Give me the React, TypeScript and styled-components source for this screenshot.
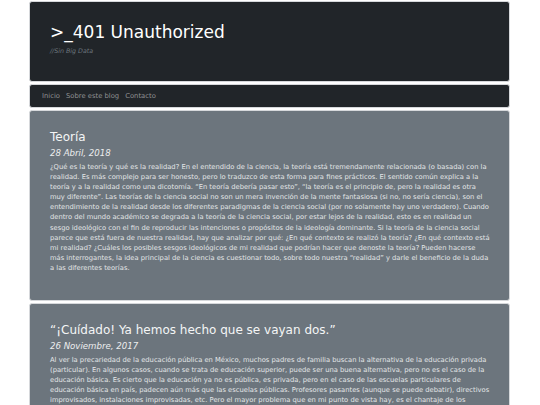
import React from 'react'
import { styled, createGlobalStyle } from 'styled-components'

const GlobalStyle = createGlobalStyle`
  html, body {
    margin: 0;
    padding: 0;
    background: #ffffff;
    font-family: "DejaVu Sans", Verdana, sans-serif;
  }
`

const posts = [
  {
    title: 'Teoría',
    date: '28 Abril, 2018',
    body:
      '¿Qué es la teoría y qué es la realidad? En el entendido de la ciencia, la teoría está tremendamente relacionada (o basada) con la realidad. Es más complejo para ser honesto, pero lo traduzco de esta forma para fines prácticos. El sentido común explica a la teoría y a la realidad como una dicotomía. “En teoría debería pasar esto”, “la teoría es el principio de, pero la realidad es otra muy diferente”. Las teorías de la ciencia social no son un mera invención de la mente fantasiosa (si no, no sería ciencia), son el entendimiento de la realidad desde los diferentes paradigmas de la ciencia social (por no solamente hay uno verdadero). Cuando dentro del mundo académico se degrada a la teoría de la ciencia social, por estar lejos de la realidad, esto es en realidad un sesgo ideológico con el fin de reproducir las intenciones o propósitos de la ideología dominante. Si la teoría de la ciencia social parece que está fuera de nuestra realidad, hay que analizar por qué: ¿En qué contexto se realizó la teoría? ¿En qué contexto está mi realidad? ¿Cuáles los posibles sesgos ideológicos de mi realidad que podrían hacer que denoste la teoría? Pueden hacerse más interrogantes, la idea principal de la ciencia es cuestionar todo, sobre todo nuestra “realidad” y darle el beneficio de la duda a las diferentes teorías.',
  },
  {
    title: '“¡Cuídado! Ya hemos hecho que se vayan dos.”',
    date: '26 Noviembre, 2017',
    body:
      'Al ver la precariedad de la educación pública en México, muchos padres de familia buscan la alternativa de la educación privada (particular). En algunos casos, cuando se trata de educación superior, puede ser una buena alternativa, pero no es el caso de la educación básica. Es cierto que la educación ya no es pública, es privada, pero en el caso de las escuelas particulares de educación básica en país, padecen aún más que las escuelas públicas. Profesores pasantes (aunque se puede debatir), directivos improvisados, instalaciones improvisadas, etc. Pero el mayor problema que en mi punto de vista hay, es el chantaje de los padres de familia hacia los profesores y directivos de la escuela.',
  },
]

const App = () => {
  return (
    <>
      <GlobalStyle />
      <Page>
        <Masthead>
          <SiteTitle>&gt;_401 Unauthorized</SiteTitle>
          <Tagline>//Sin Big Data</Tagline>
        </Masthead>
        <Nav>
          <NavLink href="#">Inicio</NavLink>
          <NavLink href="#">Sobre este blog</NavLink>
          <NavLink href="#">Contacto</NavLink>
        </Nav>
        {posts.map((p) => (
          <Post key={p.title}>
            <PostTitle>{p.title}</PostTitle>
            <PostDate>{p.date}</PostDate>
            <PostBody>{p.body}</PostBody>
          </Post>
        ))}
      </Page>
    </>
  )
}

export default App

const Page = styled.div`
  width: 481px;
  margin: 1px 0 0 29px;
  display: flex;
  flex-direction: column;
  gap: 2px;
`

const Card = styled.div`
  border: 1px solid #d6d8db;
  border-radius: 3px;
  box-sizing: border-box;
`

const Masthead = styled(Card)`
  background: #212529;
  height: 81px;
  padding: 18px 20px 0;
`

const SiteTitle = styled.h1`
  margin: 0;
  color: #ffffff;
  font-size: 17px;
  font-weight: 400;
  line-height: 24px;
`

const Tagline = styled.div`
  color: #6c757d;
  font-size: 6.3px;
  font-style: italic;
  margin-top: 3px;
`

const Nav = styled(Card)`
  background: #212529;
  height: 24px;
  padding: 0 12px;
  display: flex;
  align-items: center;
  gap: 6px;
`

const NavLink = styled.a`
  color: #8f9193;
  font-size: 6.8px;
  text-decoration: none;
`

const Post = styled(Card)`
  background: #6c757d;
  padding: 17px 19px 17px 20px;
`

const PostTitle = styled.h2`
  margin: 0;
  color: #f4f5f6;
  font-size: 12px;
  font-weight: 400;
  line-height: 18px;
`

const PostDate = styled.div`
  color: #eceeef;
  font-size: 8.6px;
  font-style: italic;
  line-height: 14px;
  margin-bottom: 2px;
`

const PostBody = styled.p`
  margin: 0 0 10px;
  color: #e3e5e7;
  font-size: 6.75px;
  line-height: 10.1px;
`
